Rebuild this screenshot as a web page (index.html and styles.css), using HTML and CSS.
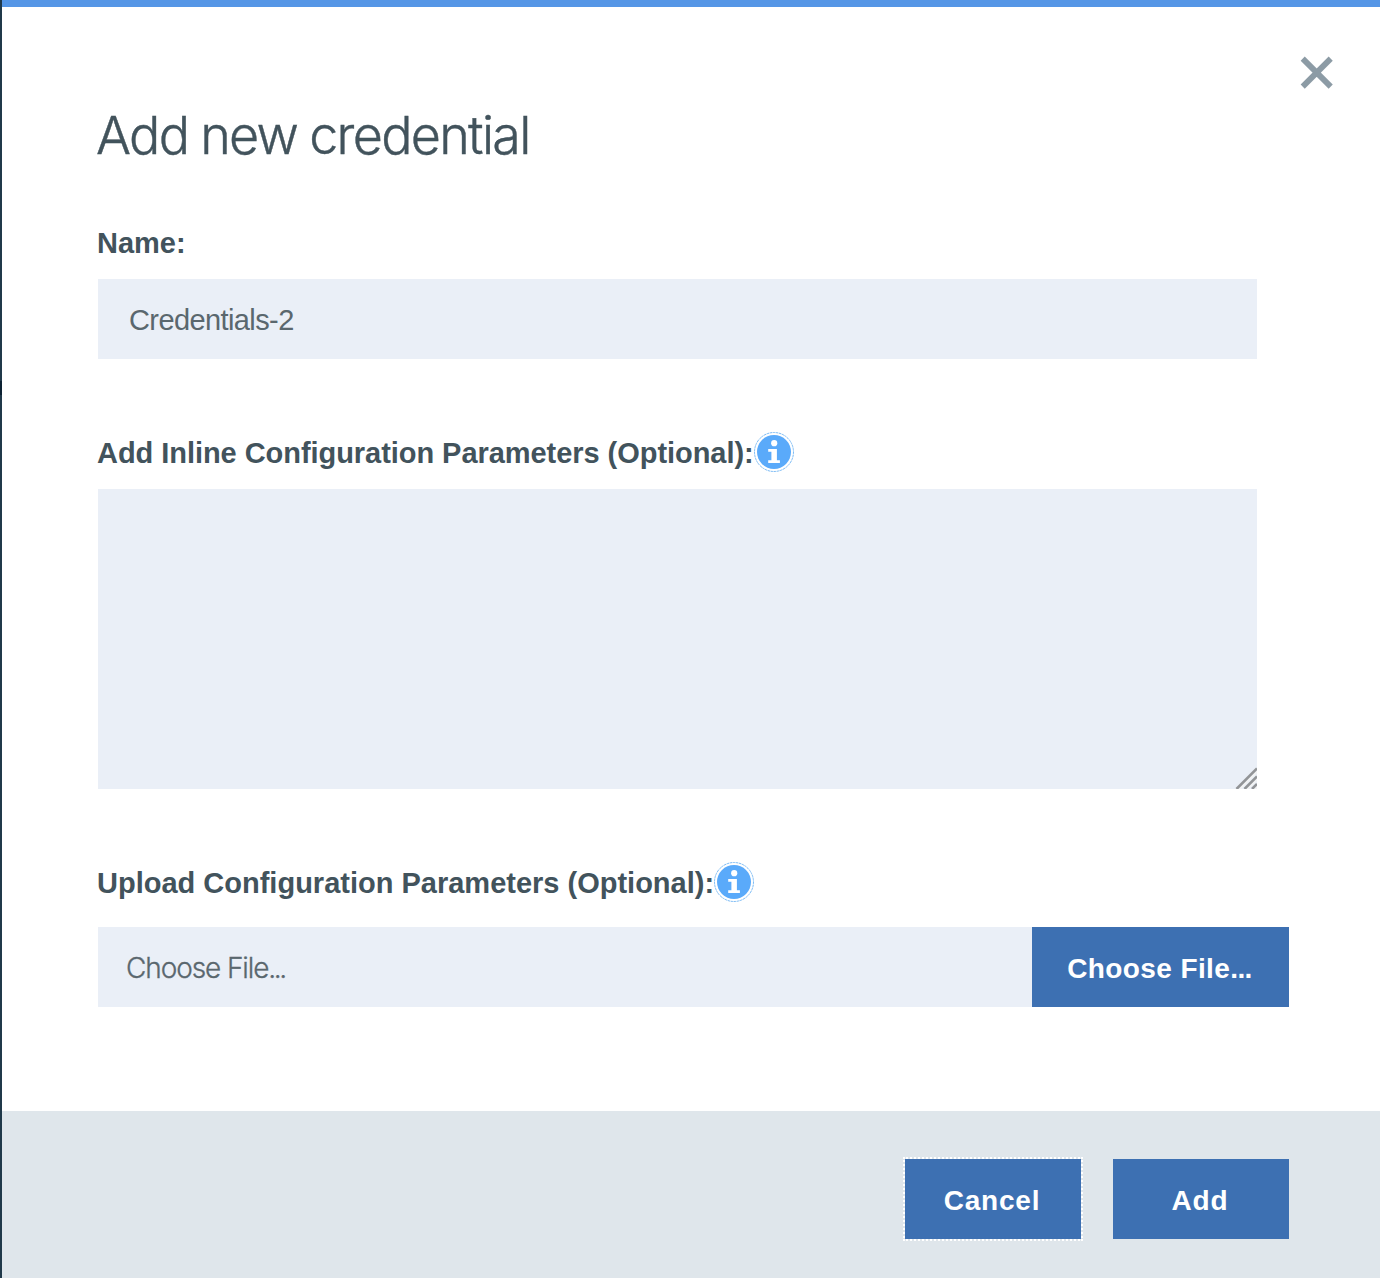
FILE: index.html
```html
<!DOCTYPE html>
<html lang="en">
<head>
<meta charset="utf-8">
<title>Add new credential</title>
<link rel="stylesheet" href="styles.css">
</head>
<body>
<main class="dialog">
  <header class="dialog-header">
    <button class="close" aria-label="Close"><svg width="34" height="34" viewBox="0 0 34 34"><path d="M2.7 3.6L30.7 31.6M30.7 3.6L2.7 31.6" stroke="#8c9ba5" stroke-width="5.8"/></svg></button>
    <h1 class="title">Add new credential</h1>
  </header>
  <form class="form">
    <label class="label name-label"><span>Name:</span></label>
    <div class="input name-input"><span>Credentials-2</span></div>
    <label class="label inline-label"><span>Add Inline Configuration Parameters (Optional):</span><svg class="info" viewBox="0 0 40 40"><circle cx="20" cy="20" r="19.5" fill="#fff" stroke="#7dbcf5" stroke-dasharray="2.5 .6"/><circle cx="20" cy="20" r="17" fill="#5aaafa"/><circle cx="20.2" cy="11.2" r="3.1" fill="#fff"/><path d="M14.2 17.1h8.7v11.2h3V31H14.2v-2.7h3.2v-8.5h-3.2z" fill="#fff"/></svg></label>
    <div class="input area"><svg class="grip" viewBox="0 0 22 22"><path d="M4.5 22L22 4.5M12.2 22L22 12.2M19.5 22L22 19.5" stroke="#f2f3f4" stroke-width="2.4"/><path d="M1.5 22L22 1.5M9.5 22L22 9.5M17 22L22 17" stroke="#929497" stroke-width="2.6"/></svg></div>
    <label class="label upload-label"><span>Upload Configuration Parameters (Optional):</span><svg class="info" viewBox="0 0 40 40"><circle cx="20" cy="20" r="19.5" fill="#fff" stroke="#7dbcf5" stroke-dasharray="2.5 .6"/><circle cx="20" cy="20" r="17" fill="#5aaafa"/><circle cx="20.2" cy="11.2" r="3.1" fill="#fff"/><path d="M14.2 17.1h8.7v11.2h3V31H14.2v-2.7h3.2v-8.5h-3.2z" fill="#fff"/></svg></label>
    <div class="file-row">
      <div class="input file-input"><span>Choose File<span class="dots">...</span></span></div>
      <button type="button" class="button choose">Choose File<span class="dots">...</span></button>
    </div>
  </form>
  <footer class="footer">
    <button class="button cancel">Cancel</button>
    <button class="button add">Add</button>
  </footer>
</main>
</body>
</html>
```
FILE: styles.css
```css
* { box-sizing: border-box; }
body {
  margin: 0;
  padding-left: 2px;
  background: linear-gradient(#0c2233, #0c2233) 0 381px / 2px 14px no-repeat, #20394a;
  color: #42535c;
  font-family: "Liberation Sans", Arial, sans-serif;
}
.dialog {
  display: flex;
  flex-direction: column;
  height: 1278px;
  background: #fff;
  overflow: hidden;
}
.dialog-header {
  height: 223px;
  border-top: 7px solid #5596e6;
  padding: 48px 46px 0 94px;
}
.close {
  display: block;
  width: 34px;
  height: 34px;
  margin-left: auto;
  padding: 0;
  border: 0;
  background: none;
}
.close svg { display: block; }
.title {
  margin: 17px 0 0;
  font-family: Inter, "Liberation Sans", sans-serif;
  font-size: 52px;
  line-height: 60px;
  font-weight: 300;
  letter-spacing: -1.7px;
  word-spacing: -1px;
  white-space: nowrap;
  -webkit-text-stroke: .4px #42535c;
}
.form {
  display: flex;
  flex-direction: column;
  width: 1287px;
  height: 888px;
  padding-left: 96px;
}
.label {
  display: flex;
  align-items: center;
  height: 40px;
  margin-left: -1px;
  font-size: 29px;
  font-weight: 700;
  white-space: nowrap;
}
.label span { padding-top: 2px; }
.name-label span { padding-top: 0; }
.input {
  width: 1159px;
  background: #eaeff7;
  color: #5a676e;
  font-size: 28px;
}
.name-input {
  display: flex;
  align-items: center;
  height: 80px;
  margin-top: 16px;
  padding: 3px 0 0 31px;
  font-size: 29px;
  letter-spacing: -.6px;
}
.inline-label {
  margin-top: 73px;
  letter-spacing: -.05px;
}
.info { width: 40px; height: 40px; overflow: visible; }
.area {
  display: flex;
  justify-content: flex-end;
  align-items: flex-end;
  height: 300px;
  margin-top: 17px;
}
.grip { width: 22px; height: 22px; }
.upload-label { margin-top: 73px; }
.file-row { display: flex; margin-top: 25px; }
.file-input {
  display: flex;
  align-items: center;
  width: 934px;
  height: 80px;
  padding: 2px 0 0 28px;
  font-family: Inter, "Liberation Sans", sans-serif;
  font-weight: 300;
  letter-spacing: -1.1px;
  -webkit-text-stroke: .3px #5a676e;
}
.file-input .dots { letter-spacing: -2.4px; }
.button {
  height: 80px;
  padding: 4px 2px 0 0;
  border: 0;
  background: #3d70b2;
  color: #fff;
  font: 700 28px "Liberation Sans", Arial, sans-serif;
  letter-spacing: .8px;
}
.choose {
  width: 257px;
  letter-spacing: .4px;
}
.choose .dots { letter-spacing: -.6px; }
.footer {
  display: flex;
  justify-content: flex-end;
  gap: 32px;
  height: 167px;
  padding: 48px 91px 0 0;
  background: #dfe6eb;
}
.cancel, .add { width: 176px; }
.cancel { outline: 2px dotted #fff; }
```
